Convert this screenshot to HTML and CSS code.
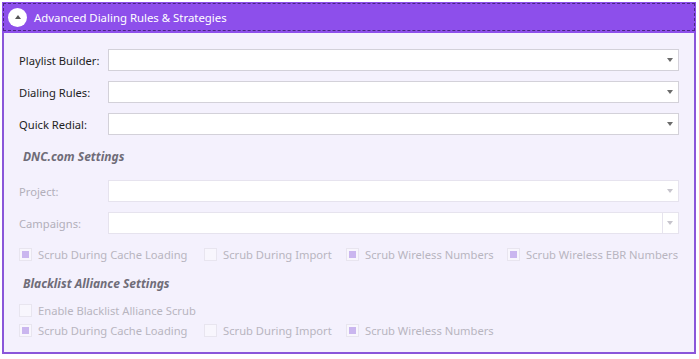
FILE: index.html
```html
<!DOCTYPE html>
<html lang="en">
  <head>
    <meta charset="UTF-8" />
    <meta name="viewport" content="width=device-width, initial-scale=1.0" />
    <title>Advanced Dialing Rules</title>
    <link rel="stylesheet" href="styles.css">
  </head>
  <body>
    <div class="panel">
      <div class="panel-header">
        <div class="header-focus">
          <span class="toggle"><span class="toggle-arrow"></span></span>
          <span class="header-title">Advanced Dialing Rules &amp; Strategies</span>
        </div>
      </div>
      <div class="panel-body">
        <div class="field">
          <label>Playlist Builder:</label>
          <div class="combo"><span class="arrow"></span></div>
        </div>
        <div class="field">
          <label>Dialing Rules:</label>
          <div class="combo"><span class="arrow"></span></div>
        </div>
        <div class="field">
          <label>Quick Redial:</label>
          <div class="combo"><span class="arrow"></span></div>
        </div>

        <h3 class="group-title">DNC.com Settings</h3>
        <div class="field disabled">
          <label>Project:</label>
          <div class="combo"><span class="arrow"></span></div>
        </div>
        <div class="field disabled">
          <label>Campaigns:</label>
          <div class="combo split"><span class="arrow"></span></div>
        </div>
        <div class="checks">
          <span class="check"><span class="box checked"></span>Scrub During Cache Loading</span>
          <span class="check"><span class="box"></span>Scrub During Import</span>
          <span class="check"><span class="box checked"></span>Scrub Wireless Numbers</span>
          <span class="check"><span class="box checked"></span>Scrub Wireless EBR Numbers</span>
        </div>

        <h3 class="group-title second">Blacklist Alliance Settings</h3>
        <div class="checks single">
          <span class="check"><span class="box"></span>Enable Blacklist Alliance Scrub</span>
        </div>
        <div class="checks">
          <span class="check"><span class="box checked"></span>Scrub During Cache Loading</span>
          <span class="check"><span class="box"></span>Scrub During Import</span>
          <span class="check"><span class="box checked"></span>Scrub Wireless Numbers</span>
        </div>
      </div>
    </div>
  </body>
</html>
```
FILE: styles.css
```css
body {
  margin: 0;
  background-color: #ffffff;
  font-family: "Noto Sans", "Open Sans", sans-serif;
  font-size: 11.2px;
  color: #222;
}

.panel {
  margin: 2px 3px 4px 2px;
  border: 2px solid #8a56da;
  border-top: none;
  background-color: #f4f1fd;
}

.panel-header {
  background-color: #8d4feb;
  padding: 1px 1px 2px 1px;
  margin: 0 -2px;
}

.header-focus {
  display: flex;
  align-items: center;
  height: 26px;
  border: 1px dashed #4a2a80;
  padding-left: 4px;
}

.toggle {
  width: 19px;
  height: 19px;
  border-radius: 50%;
  background-color: #ffffff;
  display: flex;
  align-items: center;
  justify-content: center;
}

.toggle-arrow {
  width: 0;
  height: 0;
  border-left: 3px solid transparent;
  border-right: 3px solid transparent;
  border-bottom: 4px solid #555;
  margin-top: -1px;
}

.header-title {
  color: #ffffff;
  font-size: 11.4px;
  margin-left: 7px;
}

.panel-body {
  padding: 16px 15px 12px 15px;
}

.field {
  display: flex;
  align-items: center;
  height: 22px;
  margin-bottom: 10px;
}

.field label {
  width: 89px;
  color: #1e1e1e;
}

.combo {
  flex: 1;
  height: 20px;
  background-color: #ffffff;
  border: 1px solid #d3d1d9;
  position: relative;
}

.arrow {
  position: absolute;
  right: 5px;
  top: 8px;
  width: 0;
  height: 0;
  border-left: 3px solid transparent;
  border-right: 3px solid transparent;
  border-top: 4px solid #6b6b6b;
}

.field.disabled label {
  color: #b2afba;
}

.field.disabled .combo {
  border-color: #e6e3ee;
}

.field.disabled .arrow {
  border-top-color: #c6c4cc;
}

.combo.split::before {
  content: "";
  position: absolute;
  right: 15px;
  top: 0;
  bottom: 0;
  border-left: 1px solid #e6e3ee;
}

.group-title {
  margin: 10px 0 11px 0;
  height: 24px;
  line-height: 24px;
  padding-left: 4px;
  font-size: 12px;
  font-weight: bold;
  font-style: italic;
  color: #6f6c78;
}

.group-title.second {
  margin-top: 8px;
  margin-bottom: 4px;
}

.checks {
  display: grid;
  grid-template-columns: 185px 142px 161px auto;
  height: 20px;
  align-items: center;
  color: #b8b5c0;
  white-space: nowrap;
}

.checks.single {
  grid-template-columns: auto;
}

.check {
  display: flex;
  align-items: center;
}

.box {
  width: 11px;
  height: 11px;
  border: 1px solid #e8e5ef;
  background-color: #f8f6fd;
  margin-right: 6px;
  display: flex;
  align-items: center;
  justify-content: center;
}

.box.checked::after {
  content: "";
  width: 7px;
  height: 7px;
  background-color: #cab6ef;
}
```
